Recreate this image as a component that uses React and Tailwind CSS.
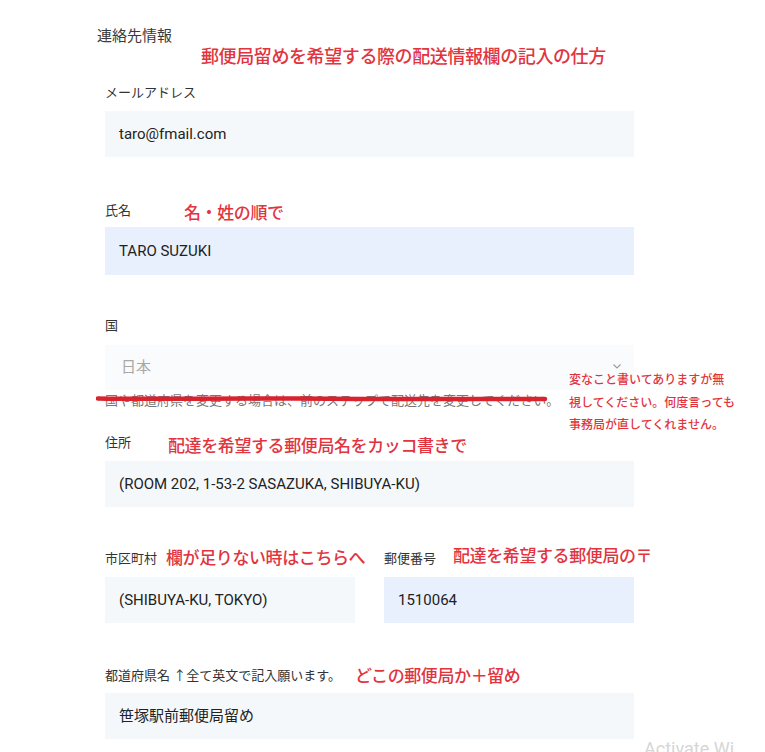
import React from "react";

const RED = "text-[#e2343f]";

function Label({ children, className = "" }) {
  return <span className={`text-[13px] text-[#333] leading-none whitespace-nowrap ${className}`}>{children}</span>;
}

function Note({ children, className = "" }) {
  return (
    <span className={`text-[17px] ${RED} font-medium leading-none tracking-[-0.4px] whitespace-nowrap ${className}`}>
      {children}
    </span>
  );
}

function Input({ children, blue = false, className = "" }) {
  return (
    <div
      className={`h-[46px] flex items-center pl-[14px] text-[15px] text-[#222] ${
        blue ? "bg-[#e8f0fe]" : "bg-[#f5f8fa]"
      } ${className}`}
    >
      {children}
    </div>
  );
}

export default function App() {
  return (
    <div
      className="w-[765px] h-[752px] bg-white relative overflow-hidden"
      style={{ fontFamily: 'Roboto, "Noto Sans CJK JP", sans-serif' }}
    >
      <div className="pl-[97px] pt-[27px]">
        <div className="text-[15px] text-[#3a3a3a] leading-[18px]">連絡先情報</div>
        <div className="pl-[104px] mt-[1px]">
          <Note className="text-[18px]">郵便局留めを希望する際の配送情報欄の記入の仕方</Note>
        </div>
      </div>

      <div className="pl-[105px] w-[634px]">
        {/* Email */}
        <div className="h-[20px] mt-[12px] flex items-center">
          <Label>メールアドレス</Label>
        </div>
        <Input className="mt-[9px]">taro@fmail.com</Input>

        {/* Name */}
        <div className="h-[20px] mt-[43px] flex items-center">
          <Label>氏名</Label>
          <Note className="ml-[53px] mt-[6px]">名・姓の順で</Note>
        </div>
        <Input blue className="mt-[7px] h-[48px]">TARO SUZUKI</Input>

        {/* Country */}
        <div className="h-[20px] mt-[40px] flex items-center">
          <Label>国</Label>
        </div>
        <div className="mt-[10px] h-[45px] bg-[#fafbfc] flex items-center justify-between pl-[16px] pr-[12px] text-[15px] text-[#a8a8a8]">
          <span>日本</span>
          <svg width="10" height="7" viewBox="0 0 10 7" className="mt-[-2px]">
            <path d="M1.5 1.5 L5 5 L8.5 1.5" fill="none" stroke="#9a9a9a" strokeWidth="1.1" />
          </svg>
        </div>
        <div className="relative h-[22px] mt-[-1px] flex items-center">
          <span className="text-[13px] text-[#777] leading-none whitespace-nowrap">
            国や都道府県を変更する場合は、前のステップで配送先を変更してください。
          </span>
          <svg
            className="absolute left-[-9px] top-[5px]"
            width="452"
            height="10"
            viewBox="0 0 452 10"
          >
            <path
              d="M2 4.5 C 60 5.5, 120 4, 200 4.6 S 340 5.2, 449 5"
              fill="none"
              stroke="#d9232f"
              strokeWidth="4.5"
              strokeLinecap="round"
            />
          </svg>
        </div>

        {/* Address */}
        <div className="h-[20px] mt-[21px] flex items-center">
          <Label>住所</Label>
          <Note className="ml-[37px] mt-[8px]">配達を希望する郵便局名をカッコ書きで</Note>
        </div>
        <Input className="mt-[9px]">(ROOM 202, 1-53-2 SASAZUKA, SHIBUYA-KU)</Input>

        {/* City / Postal */}
        <div className="grid grid-cols-[250px_250px] gap-x-[29px] mt-[41px]">
          <div>
            <div className="h-[20px] flex items-center">
              <Label>市区町村</Label>
              <Note className="ml-[9px]">欄が足りない時はこちらへ</Note>
            </div>
            <Input className="mt-[9px]">(SHIBUYA-KU, TOKYO)</Input>
          </div>
          <div>
            <div className="h-[20px] flex items-center">
              <Label>郵便番号</Label>
              <Note className="ml-[17px] mt-[-3px]">配達を希望する郵便局の〒</Note>
            </div>
            <Input blue className="mt-[9px]">1510064</Input>
          </div>
        </div>

        {/* Prefecture */}
        <div className="h-[20px] mt-[42px] flex items-center">
          <Label>都道府県名 ↑全て英文で記入願います。</Label>
          <Note className="ml-[14px] mt-[2px]">どこの郵便局か＋留め</Note>
        </div>
        <Input className="mt-[8px]">笹塚駅前郵便局留め</Input>
      </div>

      {/* side note */}
      <div className={`absolute left-[569px] top-[369px] text-[12px] font-medium leading-[22.5px] ${RED}`}>
        <div>変なこと書いてありますが無</div>
        <div>視してください。何度言っても</div>
        <div>事務局が直してくれません。</div>
      </div>

      <div className="absolute left-[644px] top-[740px] text-[18px] text-[#d6d6d6] leading-none whitespace-nowrap">
        Activate Wi
      </div>
    </div>
  );
}
